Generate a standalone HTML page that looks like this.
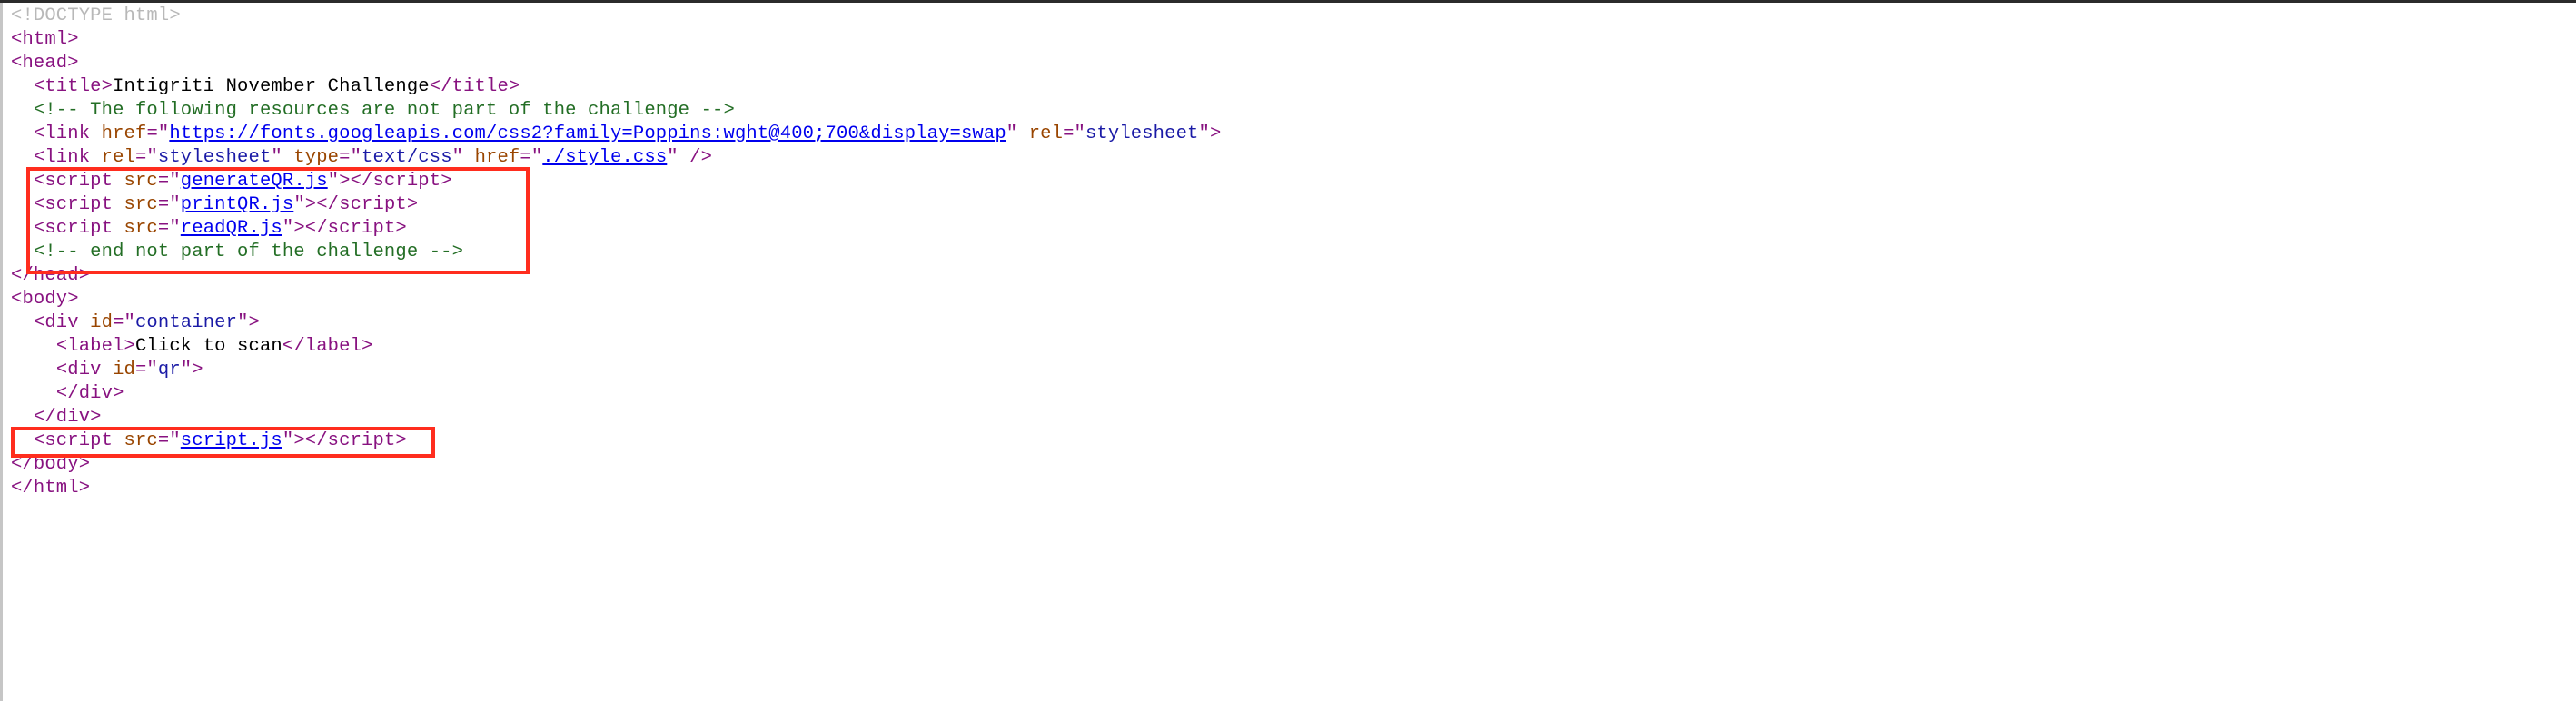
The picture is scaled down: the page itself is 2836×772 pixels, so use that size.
<!DOCTYPE html>
<html><head><style>
html,body{margin:0;padding:0;background:#fff;width:2836px;height:772px;overflow:hidden;position:relative}
#bar{position:absolute;left:0;top:0;width:2836px;height:3px;background:#2b2b2b}
#gut{position:absolute;left:0;top:3px;width:3px;height:769px;background:#c6c6c6}
pre{position:absolute;left:12px;top:5px;margin:0;font-family:"Liberation Mono",monospace;font-size:20.5px;letter-spacing:0.15px;line-height:26px;color:#000}
.t{color:#881280}.a{color:#994500}.v{color:#1a1aa6}.l{color:#0000ee;text-decoration:underline}.c{color:#236e25}.d{color:#b8b8b8}
.box{position:absolute;border:4px solid #ff2d1e;box-sizing:border-box}
</style></head><body>
<div id="bar"></div><div id="gut"></div>
<pre><span class="d">&lt;!DOCTYPE html&gt;</span>
<span class="t">&lt;html&gt;</span>
<span class="t">&lt;head&gt;</span>
  <span class="t">&lt;title&gt;</span>Intigriti November Challenge<span class="t">&lt;/title&gt;</span>
  <span class="c">&lt;!-- The following resources are not part of the challenge --&gt;</span>
  <span class="t">&lt;link </span><span class="a">href</span><span class="t">="</span><span class="l">https://fonts.googleapis.com/css2?family=Poppins:wght@400;700&amp;display=swap</span><span class="t">" </span><span class="a">rel</span><span class="t">="</span><span class="v">stylesheet</span><span class="t">"&gt;</span>
  <span class="t">&lt;link </span><span class="a">rel</span><span class="t">="</span><span class="v">stylesheet</span><span class="t">" </span><span class="a">type</span><span class="t">="</span><span class="v">text/css</span><span class="t">" </span><span class="a">href</span><span class="t">="</span><span class="l">./style.css</span><span class="t">" /&gt;</span>
  <span class="t">&lt;script </span><span class="a">src</span><span class="t">="</span><span class="l">generateQR.js</span><span class="t">"&gt;&lt;/script&gt;</span>
  <span class="t">&lt;script </span><span class="a">src</span><span class="t">="</span><span class="l">printQR.js</span><span class="t">"&gt;&lt;/script&gt;</span>
  <span class="t">&lt;script </span><span class="a">src</span><span class="t">="</span><span class="l">readQR.js</span><span class="t">"&gt;&lt;/script&gt;</span>
  <span class="c">&lt;!-- end not part of the challenge --&gt;</span>
<span class="t">&lt;/head&gt;</span>
<span class="t">&lt;body&gt;</span>
  <span class="t">&lt;div </span><span class="a">id</span><span class="t">="</span><span class="v">container</span><span class="t">"&gt;</span>
    <span class="t">&lt;label&gt;</span>Click to scan<span class="t">&lt;/label&gt;</span>
    <span class="t">&lt;div </span><span class="a">id</span><span class="t">="</span><span class="v">qr</span><span class="t">"&gt;</span>
    <span class="t">&lt;/div&gt;</span>
  <span class="t">&lt;/div&gt;</span>
  <span class="t">&lt;script </span><span class="a">src</span><span class="t">="</span><span class="l">script.js</span><span class="t">"&gt;&lt;/script&gt;</span>
<span class="t">&lt;/body&gt;</span>
<span class="t">&lt;/html&gt;</span></pre>
<div class="box" style="left:29px;top:184px;width:554px;height:118px"></div>
<div class="box" style="left:12px;top:470px;width:467px;height:34px"></div>
</body></html>
